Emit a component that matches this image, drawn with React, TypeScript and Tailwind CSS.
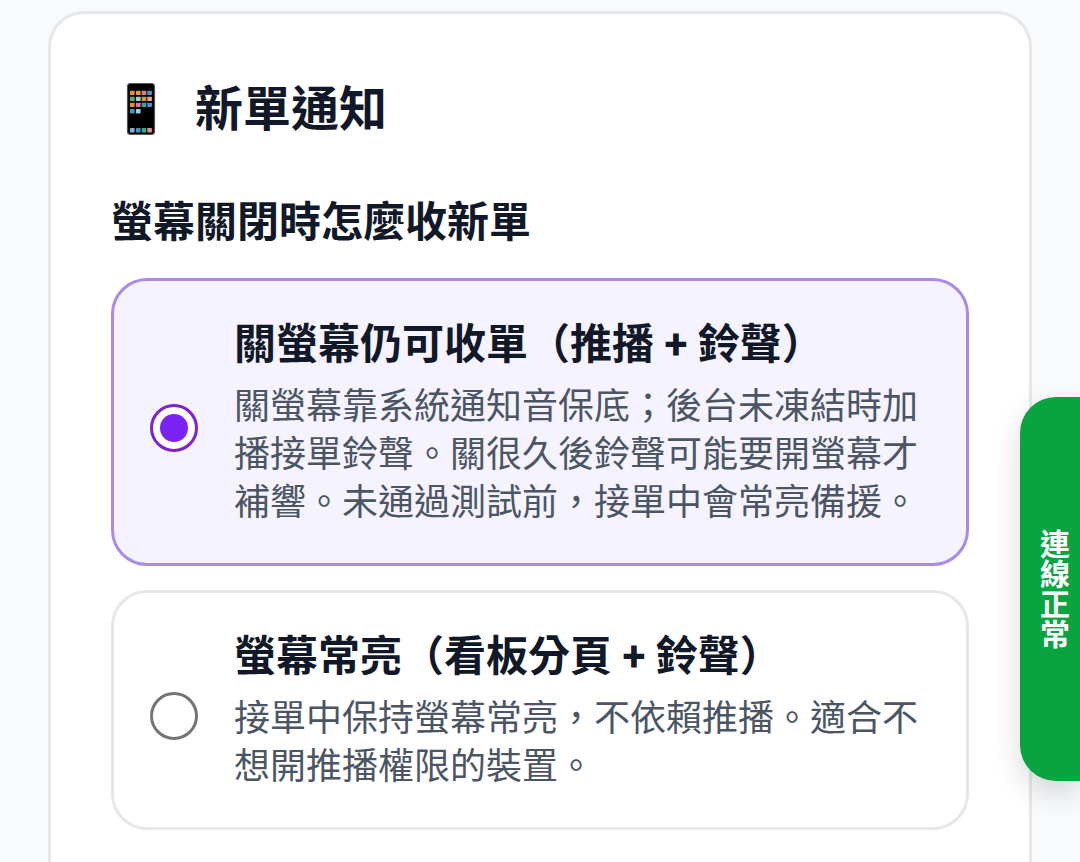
const cjk = "font-['Roboto','Noto_Sans_CJK_TC','Noto_Sans_CJK_JP',sans-serif]";

function Radio({ checked }: { checked: boolean }) {
  return checked ? (
    <span className="mt-[12px] flex h-12 w-12 shrink-0 items-center justify-center rounded-full border-[3px] border-[#7e22ce] bg-white">
      <span className="h-[28px] w-[28px] rounded-full bg-[#7b22f5]" />
    </span>
  ) : (
    <span className="mt-[12px] h-12 w-12 shrink-0 rounded-full border-[3px] border-[#757575] bg-white" />
  );
}

function Option({ checked, title, lines }: { checked: boolean; title: string; lines: string[] }) {
  return (
    <div
      className={
        "flex items-center gap-[36px] rounded-[36px] border-[3px] px-[36px] py-[36px] " +
        (checked ? "border-[#a98ae8] bg-[#f5f3ff]" : "border-[#e5e7eb] bg-white")
      }
    >
      <Radio checked={checked} />
      <div className="min-w-0 flex-1">
        <div className="text-[42px] font-bold leading-[55px] text-[#111827]">{title}</div>
        <div className="mt-[11px] text-[36px] leading-[48px] text-[#4b5563]">
          {lines.map((l) => (
            <div key={l} className="whitespace-nowrap">{l}</div>
          ))}
        </div>
      </div>
    </div>
  );
}

const apps: [number, number, string][] = [
  [19, 10.7, "#e8913c"], [25, 10.7, "#e89a3c"], [30.7, 10.7, "#d8808a"], [36.3, 10.7, "#4f93c9"],
  [19, 16.7, "#57b26b"], [25, 16.7, "#9fd0e8"], [30.7, 16.7, "#d9973f"], [36.3, 16.7, "#e6b07a"],
  [19, 22.7, "#ee8a2f"], [25, 22.7, "#dd7a9a"], [30.7, 22.7, "#38a89d"], [36.3, 22.7, "#4f93c9"],
  [19, 29, "#3fa0b5"], [25, 29, "#8fd0ea"],
  [19, 48, "#7fb0d8"], [25, 48, "#3f93c9"], [30.7, 48, "#38a888"], [36.3, 48, "#e88a9a"],
];

export default function App() {
  return (
    <div className={"relative h-[862px] w-[1080px] overflow-hidden bg-[#f9fafb] px-[48px] pt-[11px] " + cjk}>
      <div className="h-[1000px] rounded-[36px] border-[3px] border-[#e5e7eb] bg-white px-[60px] pt-[60px]">
        <div className="flex h-[72px] items-center gap-[24px]">
          <svg width="60" height="60" viewBox="0 0 60 60" className="shrink-0">
            <rect x="16.5" y="3.5" width="27" height="51" rx="3" fill="#000" stroke="#5a5553" strokeWidth="1.2" />
            {apps.map(([x, y, c]) => (
              <rect key={x + "-" + y} x={x} y={y} width="4.6" height="4.4" rx="0.6" fill={c} />
            ))}
          </svg>
          <h1 className="text-[48px] font-bold leading-[72px] text-[#111827]">新單通知</h1>
        </div>
        <h2 className="mt-[45px] text-[42px] font-bold leading-[63px] text-[#111827]">螢幕關閉時怎麼收新單</h2>
        <div className="mt-[24px] flex flex-col gap-[24px]">
          <Option
            checked
            title="關螢幕仍可收單（推播 + 鈴聲）"
            lines={[
              "關螢幕靠系統通知音保底；後台未凍結時加",
              "播接單鈴聲。關很久後鈴聲可能要開螢幕才",
              "補響。未通過測試前，接單中會常亮備援。",
            ]}
          />
          <Option
            checked={false}
            title="螢幕常亮（看板分頁 + 鈴聲）"
            lines={["接單中保持螢幕常亮，不依賴推播。適合不", "想開推播權限的裝置。"]}
          />
        </div>
      </div>
      <div className="absolute right-0 top-[397px] flex h-[384px] w-[60px] items-center justify-center rounded-l-[36px] bg-[#08a43f] pl-[4px] text-[30px] font-bold leading-[30px] text-white shadow-[0_12px_30px_rgba(0,0,0,0.15)] [writing-mode:vertical-rl]">
        連線正常
      </div>
    </div>
  );
}
